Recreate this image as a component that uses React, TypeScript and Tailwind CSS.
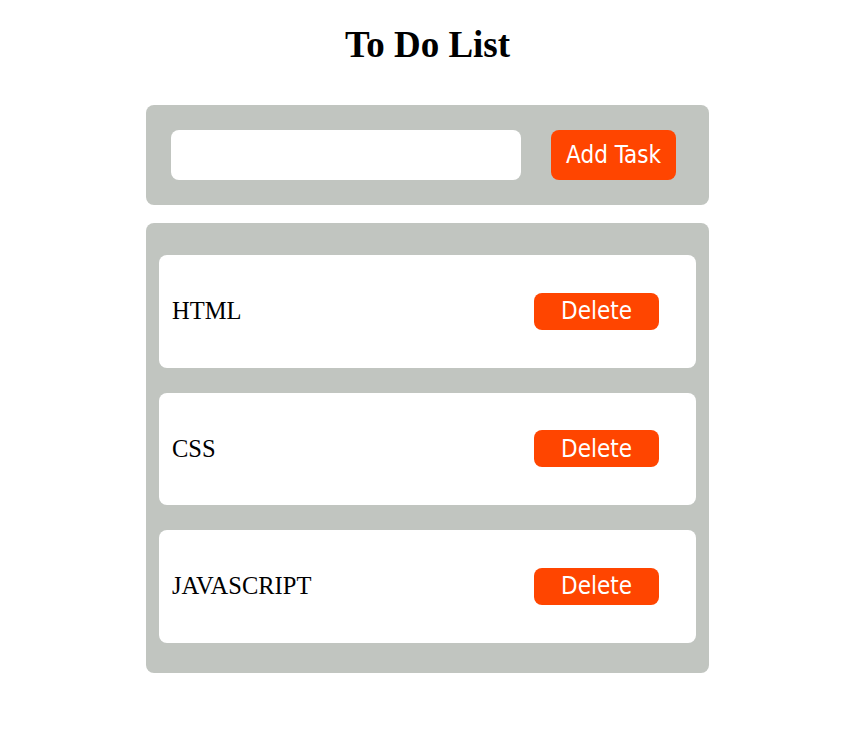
const tasks = ["HTML", "CSS", "JAVASCRIPT"];

export default function App() {
  return (
    <div className="min-h-screen bg-white font-['Liberation_Serif',serif] text-black">
      <div className="ml-[146px] w-[563px]">
        <h1 className="pt-[24px] text-center text-[37px] font-bold leading-[41px]">
          To Do List
        </h1>

        <div className="mt-[40px] flex h-[100px] items-center gap-[30px] rounded-lg bg-[#c1c5c0] pl-[25px]">
          <input
            type="text"
            className="h-[50px] w-[350px] rounded-lg bg-white px-3 text-[20px] outline-none"
          />
          <button className="h-[50px] w-[125px] rounded-lg bg-[#ff4500] font-['DejaVu_Sans_Condensed','DejaVu_Sans',sans-serif] text-[24px] text-white">
            Add Task
          </button>
        </div>

        <ul className="mt-[18px] flex flex-col gap-[25px] rounded-lg bg-[#c1c5c0] px-[13px] pb-[30px] pt-[32px]">
          {tasks.map((t) => (
            <li
              key={t}
              className="flex h-[112.5px] items-center rounded-lg bg-white pl-[13px] pr-[37px]"
            >
              <span className="text-[24.5px] leading-none">{t}</span>
              <button className="ml-auto h-[37px] w-[125px] rounded-lg bg-[#ff4500] font-['DejaVu_Sans_Condensed','DejaVu_Sans',sans-serif] text-[24px] leading-none text-white">
                Delete
              </button>
            </li>
          ))}
        </ul>
      </div>
    </div>
  );
}
